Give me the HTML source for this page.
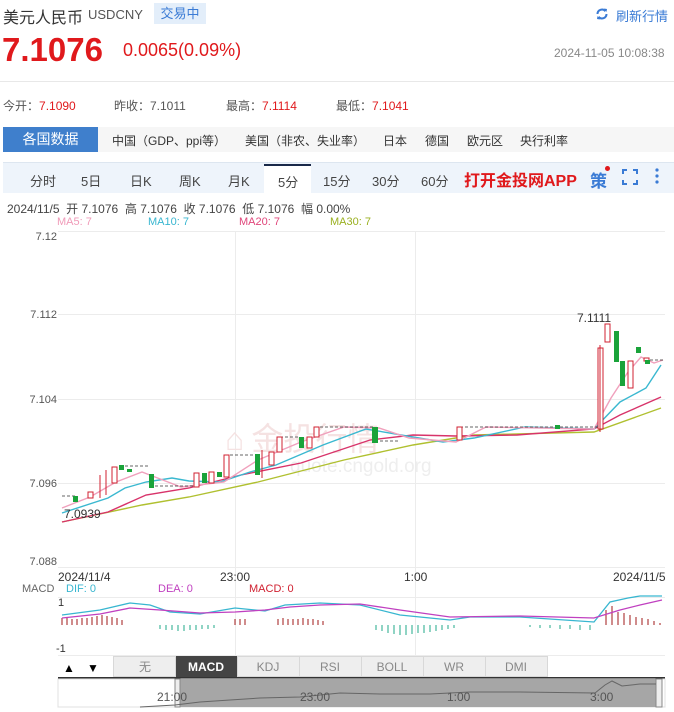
<!DOCTYPE html>
<html><head><meta charset="utf-8"><style>
*{margin:0;padding:0;box-sizing:border-box}
body{width:674px;height:712px;background:#fff;font-family:"Liberation Sans","Noto Sans CJK SC",sans-serif;position:relative;overflow:hidden;color:#333}
.a{position:absolute;white-space:nowrap}
</style></head><body>
<div class="a" style="left:3px;top:4px;font-size:16px;color:#333">美元人民币</div>
<div class="a" style="left:88px;top:7px;font-size:13px;color:#555">USDCNY</div>
<div class="a" style="left:154px;top:3px;width:52px;height:21px;background:#e3eefa;color:#3a7bd5;font-size:13px;text-align:center;line-height:21px">交易中</div>
<svg class="a" style="left:595px;top:7px" width="14" height="14" viewBox="0 0 14 14"><path d="M2.5 7a4.5 4.5 0 0 1 8-2.8" fill="none" stroke="#3a7bd5" stroke-width="2"/><path d="M11.5 7a4.5 4.5 0 0 1-8 2.8" fill="none" stroke="#3a7bd5" stroke-width="2"/><path d="M9 1.5l3 .5-.5 3z" fill="#3a7bd5"/><path d="M5 12.5l-3-.5.5-3z" fill="#3a7bd5"/></svg>
<div class="a" style="left:616px;top:6px;font-size:13px;color:#3a7bd5">刷新行情</div>
<div class="a" style="left:2px;top:31px;font-size:33px;font-weight:bold;color:#e0191c">7.1076</div>
<div class="a" style="left:123px;top:40px;font-size:18px;color:#e0191c">0.0065(0.09%)</div>
<div class="a" style="left:554px;top:46px;font-size:12px;color:#888">2024-11-05 10:08:38</div>
<div class="a" style="left:0;top:81px;width:674px;height:1px;background:#e8e8e8"></div>
<div class="a" style="left:3px;top:97px;font-size:12px;color:#555">今开：<span style="color:#e0191c">7.1090</span></div>
<div class="a" style="left:114px;top:97px;font-size:12px;color:#555">昨收：7.1011</div>
<div class="a" style="left:226px;top:97px;font-size:12px;color:#555">最高：<span style="color:#e0191c">7.1114</span></div>
<div class="a" style="left:336px;top:97px;font-size:12px;color:#555">最低：<span style="color:#e0191c">7.1041</span></div>
<div class="a" style="left:3px;top:127px;width:671px;height:25px;background:#f6f6f6"></div>
<div class="a" style="left:3px;top:127px;width:95px;height:25px;background:#3f7fcc;color:#fff;font-size:14px;text-align:center;line-height:25px">各国数据</div>
<div class="a" style="left:112px;top:132px;font-size:12px;color:#333">中国（GDP、ppi等）</div>
<div class="a" style="left:245px;top:132px;font-size:12px;color:#333">美国（非农、失业率）</div>
<div class="a" style="left:383px;top:132px;font-size:12px;color:#333">日本</div>
<div class="a" style="left:425px;top:132px;font-size:12px;color:#333">德国</div>
<div class="a" style="left:467px;top:132px;font-size:12px;color:#333">欧元区</div>
<div class="a" style="left:520px;top:132px;font-size:12px;color:#333">央行利率</div>
<div class="a" style="left:3px;top:162px;width:671px;height:31px;background:#eef4fb;border-top:1px solid #dde6f0"></div>
<div class="a" style="left:264px;top:164px;width:47px;height:29px;background:#fff;border-top:2px solid #1a2a4a"></div>
<div class="a" style="left:30px;top:171px;font-size:13px;color:#444">分时</div>
<div class="a" style="left:81px;top:171px;font-size:13px;color:#444">5日</div>
<div class="a" style="left:130px;top:171px;font-size:13px;color:#444">日K</div>
<div class="a" style="left:179px;top:171px;font-size:13px;color:#444">周K</div>
<div class="a" style="left:228px;top:171px;font-size:13px;color:#444">月K</div>
<div class="a" style="left:278px;top:172px;font-size:13px;color:#444">5分</div>
<div class="a" style="left:323px;top:171px;font-size:13px;color:#444">15分</div>
<div class="a" style="left:372px;top:171px;font-size:13px;color:#444">30分</div>
<div class="a" style="left:421px;top:171px;font-size:13px;color:#444">60分</div>
<div class="a" style="left:464px;top:167px;font-size:16px;font-weight:bold;color:#e0191c">打开金投网APP</div>
<div class="a" style="left:590px;top:167px;font-size:17px;font-weight:bold;color:#3a7bd5">策</div>
<div class="a" style="left:605px;top:166px;width:5px;height:5px;border-radius:50%;background:#e0191c"></div>
<svg class="a" style="left:621px;top:168px" width="18" height="18" viewBox="0 0 18 18" fill="none" stroke="#3a7bd5" stroke-width="2"><path d="M2 6V2h4M12 2h4v4M16 12v4h-4M6 16H2v-4"/></svg>
<svg class="a" style="left:654px;top:167px" width="6" height="18"><circle cx="3" cy="3" r="1.6" fill="#3a7bd5"/><circle cx="3" cy="9" r="1.6" fill="#3a7bd5"/><circle cx="3" cy="15" r="1.6" fill="#3a7bd5"/></svg>
<div class="a" style="left:7px;top:200px;font-size:12px;color:#444">2024/11/5 &nbsp;开 7.1076 &nbsp;高 7.1076 &nbsp;收 7.1076 &nbsp;低 7.1076 &nbsp;幅 0.00%</div>
<div class="a" style="left:57px;top:216px;font-size:11px;color:#f09ab8">MA5: 7</div>
<div class="a" style="left:148px;top:216px;font-size:11px;color:#38b6d0">MA10: 7</div>
<div class="a" style="left:239px;top:216px;font-size:11px;color:#e0457a">MA20: 7</div>
<div class="a" style="left:330px;top:216px;font-size:11px;color:#9ab020">MA30: 7</div>
<svg class="a" style="left:0;top:0" width="674" height="712" font-family="Liberation Sans" font-size="11">
<g stroke="#ececec" stroke-width="1">
<line x1="58" y1="231.5" x2="665" y2="231.5"/><line x1="58" y1="314.5" x2="665" y2="314.5"/><line x1="58" y1="399.5" x2="665" y2="399.5"/><line x1="58" y1="483.5" x2="665" y2="483.5"/><line x1="58" y1="567.5" x2="665" y2="567.5"/>
<line x1="235.5" y1="231" x2="235.5" y2="655"/><line x1="415.5" y1="231" x2="415.5" y2="655"/>
<line x1="58" y1="597.5" x2="665" y2="597.5"/><line x1="58" y1="655.5" x2="665" y2="655.5"/>
</g>
<g fill="#555" text-anchor="end"><text x="57" y="240">7.12</text><text x="57" y="318">7.112</text><text x="57" y="403">7.104</text><text x="57" y="487">7.096</text><text x="57" y="565">7.088</text></g>
<text x="225" y="450" font-size="32" fill="#f5e2e2" font-family="Noto Sans CJK SC">⌂ 金投行情</text>
<text x="290" y="472" font-size="19" fill="#eeeeee">quote.cngold.org</text>
<g fill="none" stroke-width="1.4">
<polyline stroke="#b0c030" points="62,522 142,505 189,497 258,482 344,460 413,445 474,435 594,432 661,408"/>
<polyline stroke="#d8336a" points="62,522 108,512 146,495 189,488 241,475 301,463 370,440 413,435 456,436 517,435 594,429 620,415 661,397"/>
<polyline stroke="#3ab8d0" points="62,513 108,498 125,488 146,482 172,478 189,481 220,482 250,472 276,465 323,445 366,429 413,437 443,442 474,438 525,427 594,429 620,402 646,388 661,365"/>
<polyline stroke="#f0a0bc" points="62,508 90,497 116,482 142,472 181,487 224,482 258,460 301,442 344,427 379,428 409,438 456,442 486,427 594,429 611,398 628,372 641,357 654,363 663,360"/>
</g>
<g stroke="#333" stroke-dasharray="3,2" stroke-width="0.8"><line x1="62" y1="496" x2="75" y2="496"/><line x1="125" y1="466" x2="150" y2="466"/><line x1="150" y1="486" x2="195" y2="486"/><line x1="230" y1="455" x2="258" y2="455"/><line x1="280" y1="437" x2="300" y2="437"/><line x1="320" y1="427" x2="375" y2="427"/><line x1="375" y1="441" x2="400" y2="441"/><line x1="460" y1="427" x2="600" y2="427"/><line x1="645" y1="360" x2="665" y2="360"/></g>
<g stroke="#d02030" fill="#fff" stroke-width="1">
<rect x="88" y="492" width="5" height="6"/><rect x="112" y="467" width="5" height="16"/><rect x="194" y="473" width="5" height="14"/><rect x="209" y="472" width="5" height="11"/><rect x="224" y="455" width="5" height="22"/><rect x="269" y="452" width="5" height="13"/><rect x="277" y="437" width="5" height="15"/><rect x="307" y="437" width="5" height="11"/><rect x="314" y="427" width="5" height="10"/><rect x="457" y="427" width="5" height="13"/><rect x="598" y="348" width="5" height="81"/><rect x="605" y="324" width="5" height="18"/><rect x="628" y="361" width="5" height="27"/><rect x="644" y="358" width="5" height="3"/>
<line x1="100" y1="475" x2="100" y2="498"/><line x1="106" y1="470" x2="106" y2="495"/><line x1="262" y1="450" x2="262" y2="478"/><line x1="600" y1="345" x2="600" y2="432"/>
</g>
<g fill="#1aa33a">
<rect x="73" y="496" width="5" height="6"/><rect x="119" y="465" width="5" height="5"/><rect x="127" y="469" width="5" height="3"/><rect x="149" y="474" width="5" height="14"/><rect x="202" y="473" width="5" height="10"/><rect x="217" y="472" width="5" height="5"/><rect x="255" y="454" width="5" height="21"/><rect x="299" y="437" width="5" height="11"/><rect x="372" y="427" width="6" height="16"/><rect x="555" y="425" width="5" height="4"/><rect x="614" y="331" width="5" height="31"/><rect x="620" y="361" width="5" height="25"/><rect x="636" y="347" width="5" height="6"/><rect x="645" y="360" width="5" height="4"/>
</g>
<text x="577" y="322" font-size="12" fill="#333">7.1111</text>
<text x="64" y="518" font-size="12" fill="#333">7.0939</text>
<g fill="#333" font-size="12"><text x="58" y="581">2024/11/4</text><text x="220" y="581">23:00</text><text x="404" y="581">1:00</text><text x="613" y="581">2024/11/5</text></g>
<text x="22" y="592" fill="#666">MACD</text><text x="66" y="592" fill="#38b6d0">DIF: 0</text><text x="158" y="592" fill="#c040c0">DEA: 0</text><text x="249" y="592" fill="#d02030">MACD: 0</text>
<text x="58" y="606" fill="#333">1</text><text x="56" y="652" fill="#333">-1</text>
<g stroke="#a01818" stroke-width="1">
<path d="M62 618v7M67 618v7M72 619v6M77 619v6M82 618v7M87 618v7M92 617v8M97 616v9M102 615v10M107 616v9M112 617v8M117 618v7M122 620v5M235 619v6M240 619v6M245 619v6M278 619v6M283 618v7M288 619v6M293 619v6M298 619v6M303 618v7M308 619v6M313 619v6M318 620v5M323 621v4M606 610v15M612 606v19M618 612v13M624 613v12M630 615v10M636 617v8M642 618v7M648 619v6M654 621v4M660 623v2"/>
</g>
<g stroke="#20a888" stroke-width="1">
<path d="M160 625v4M166 625v5M172 625v5M178 625v6M184 625v6M190 625v5M196 625v5M202 625v4M208 625v4M214 625v3M376 625v5M382 625v6M388 625v8M394 625v9M400 625v10M406 625v10M412 625v9M418 625v8M424 625v8M430 625v7M436 625v6M442 625v5M448 625v4M454 625v3M530 625v2M540 625v3M550 625v3M560 625v4M570 625v4M580 625v5M590 625v5"/>
</g>
<polyline fill="none" stroke="#38b6d0" stroke-width="1.3" points="62,615 100,610 130,603 150,605 170,612 200,614 235,608 265,611 285,605 320,603 360,605 400,615 450,620 470,617 520,617 594,622 610,602 628,598 640,596 662,596"/>
<polyline fill="none" stroke="#c040c0" stroke-width="1.3" points="62,618 100,614 130,608 160,610 200,613 235,612 265,610 290,607 320,605 360,604 400,610 450,617 520,616 594,618 620,610 640,605 662,600"/>
<rect x="58" y="657" width="607" height="20" fill="#fff"/>
<text x="63" y="672" font-size="12" fill="#000">▲</text><text x="87" y="672" font-size="12" fill="#000">▼</text>
<g stroke="#d8d8d8" fill="#eeeeee"><rect x="113.5" y="656.5" width="62" height="20"/><rect x="237.5" y="656.5" width="62" height="20"/><rect x="299.5" y="656.5" width="62" height="20"/><rect x="361.5" y="656.5" width="62" height="20"/><rect x="423.5" y="656.5" width="62" height="20"/><rect x="485.5" y="656.5" width="62" height="20"/></g>
<rect x="176" y="656" width="61" height="21" fill="#444"/>
<g font-size="12" text-anchor="middle" fill="#888"><text x="145" y="671">无</text><text x="268" y="671">KDJ</text><text x="330" y="671">RSI</text><text x="392" y="671">BOLL</text><text x="454" y="671">WR</text><text x="516" y="671">DMI</text></g>
<text x="206" y="671" font-size="12" text-anchor="middle" fill="#fff" font-weight="bold">MACD</text>
<rect x="58" y="677" width="607" height="2" fill="#333"/>
<rect x="58" y="679" width="607" height="28" fill="#fff" stroke="#e0e0e0"/>
<rect x="177" y="679" width="482" height="28" fill="#a6a6a6"/>
<rect x="175" y="679" width="5" height="28" fill="#eee" stroke="#888"/><rect x="656" y="679" width="6" height="28" fill="#eee" stroke="#888"/>
<polyline fill="none" stroke="#666" stroke-width="1" points="140,707 175,705 200,702 230,700 260,698 300,697 340,693 380,694 430,694 470,692 520,692 595,693 605,685 612,681 622,686 640,684 656,684"/>
<g font-size="12" fill="#555"><text x="157" y="701">21:00</text><text x="300" y="701">23:00</text><text x="447" y="701">1:00</text><text x="590" y="701">3:00</text></g>
</svg>
</body></html>
